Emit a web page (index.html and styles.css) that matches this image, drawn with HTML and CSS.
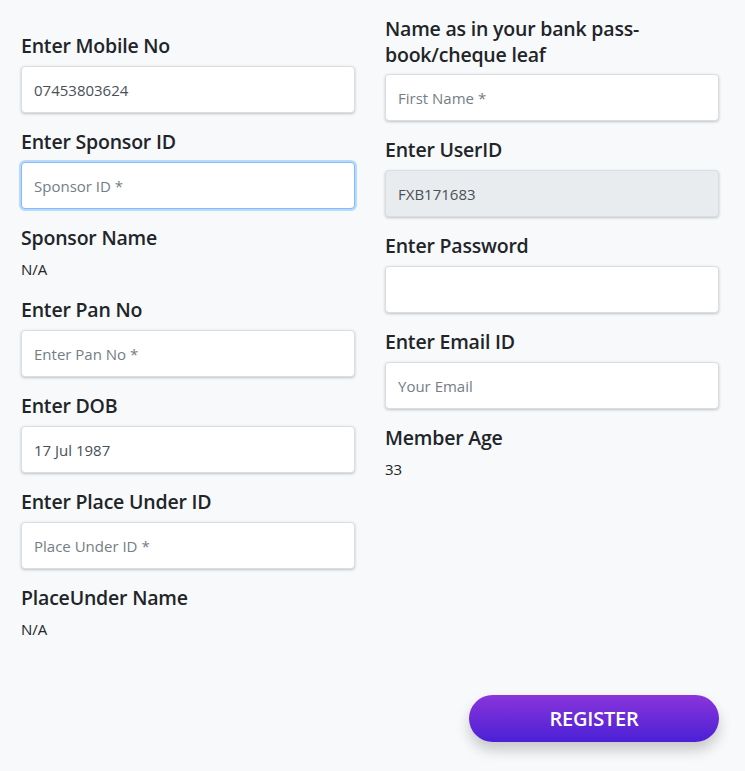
FILE: index.html
```html
<!DOCTYPE html>
<html>
<head>
<meta charset="utf-8">
<link rel="stylesheet" href="styles.css">
</head>
<body>
<form class="form">
  <div class="grid">
    <div class="col">
      <div class="group">
        <label class="label">Enter Mobile No</label>
        <input class="input" type="text" value="07453803624">
      </div>
      <div class="group">
        <label class="label">Enter Sponsor ID</label>
        <input class="input focus" type="text" placeholder="Sponsor ID *">
      </div>
      <div class="group info">
        <label class="label">Sponsor Name</label>
        <div class="value">N/A</div>
      </div>
      <div class="group">
        <label class="label">Enter Pan No</label>
        <input class="input" type="text" placeholder="Enter Pan No *">
      </div>
      <div class="group">
        <label class="label">Enter DOB</label>
        <input class="input" type="text" value="17 Jul 1987">
      </div>
      <div class="group">
        <label class="label">Enter Place Under ID</label>
        <input class="input" type="text" placeholder="Place Under ID *">
      </div>
      <div class="group info">
        <label class="label">PlaceUnder Name</label>
        <div class="value">N/A</div>
      </div>
    </div>
    <div class="col right">
      <div class="group">
        <label class="label two">Name as in your bank pass-<br>book/cheque leaf</label>
        <input class="input" type="text" placeholder="First Name *">
      </div>
      <div class="group">
        <label class="label">Enter UserID</label>
        <input class="input readonly" type="text" value="FXB171683" readonly>
      </div>
      <div class="group">
        <label class="label">Enter Password</label>
        <input class="input" type="password">
      </div>
      <div class="group">
        <label class="label">Enter Email ID</label>
        <input class="input" type="text" placeholder="Your Email">
      </div>
      <div class="group info">
        <label class="label">Member Age</label>
        <div class="value">33</div>
      </div>
    </div>
  </div>
  <div class="actions">
    <button class="btn" type="button">REGISTER</button>
  </div>
</form>
</body>
</html>
```
FILE: styles.css
```css
* { box-sizing: border-box; }
html, body {
  margin: 0;
  padding: 0;
  background: #f8f9fa;
}
body {
  font-family: "Open Sans", "Noto Sans", sans-serif;
  color: #212529;
  width: 745px;
  height: 771px;
  overflow: hidden;
}
.form {
  padding: 32px 26px 0 21px;
}
.grid {
  display: grid;
  grid-template-columns: 334px 334px;
  column-gap: 30px;
  align-items: start;
}
.col {
  display: flex;
  flex-direction: column;
}
.col.right {
  margin-top: -16px;
}
.group {
  display: flex;
  flex-direction: column;
  margin-bottom: 15px;
}
.label {
  font-size: 19.5px;
  font-weight: 600;
  line-height: 28px;
  margin-bottom: 6px;
  letter-spacing: -0.2px;
  color: #212529;
}
.label.two {
  line-height: 26px;
  margin-bottom: 6px;
}
.input {
  height: 47px;
  width: 100%;
  border: 1px solid #dadee2;
  border-radius: 4px;
  background: #fff;
  box-shadow: 0 1px 3px rgba(0,0,0,0.22);
  padding: 0 12px;
  font-family: inherit;
  font-size: 15px;
  color: #495057;
  outline: none;
}
.input::placeholder {
  color: #757d85;
}
.input.focus {
  border-color: #80bdff;
  box-shadow: 0 0 0 2px rgba(0,123,255,0.25);
}
.input.readonly {
  background: #e9ecef;
}
.info .label {
  margin-bottom: 6px;
}
.value {
  font-size: 15px;
  line-height: 22px;
  color: #212529;
  margin-bottom: 1px;
}
.actions {
  display: flex;
  justify-content: flex-end;
  margin-top: 39px;
}
.btn {
  width: 250px;
  height: 47px;
  border: none;
  border-radius: 24px;
  background: linear-gradient(180deg, #8a35da 0%, #4a20d6 100%);
  color: #fff;
  font-family: inherit;
  font-size: 20px;
  font-weight: 600;
  letter-spacing: -0.2px;
  box-shadow: 0 8px 14px rgba(0,0,0,0.2);
}
```
